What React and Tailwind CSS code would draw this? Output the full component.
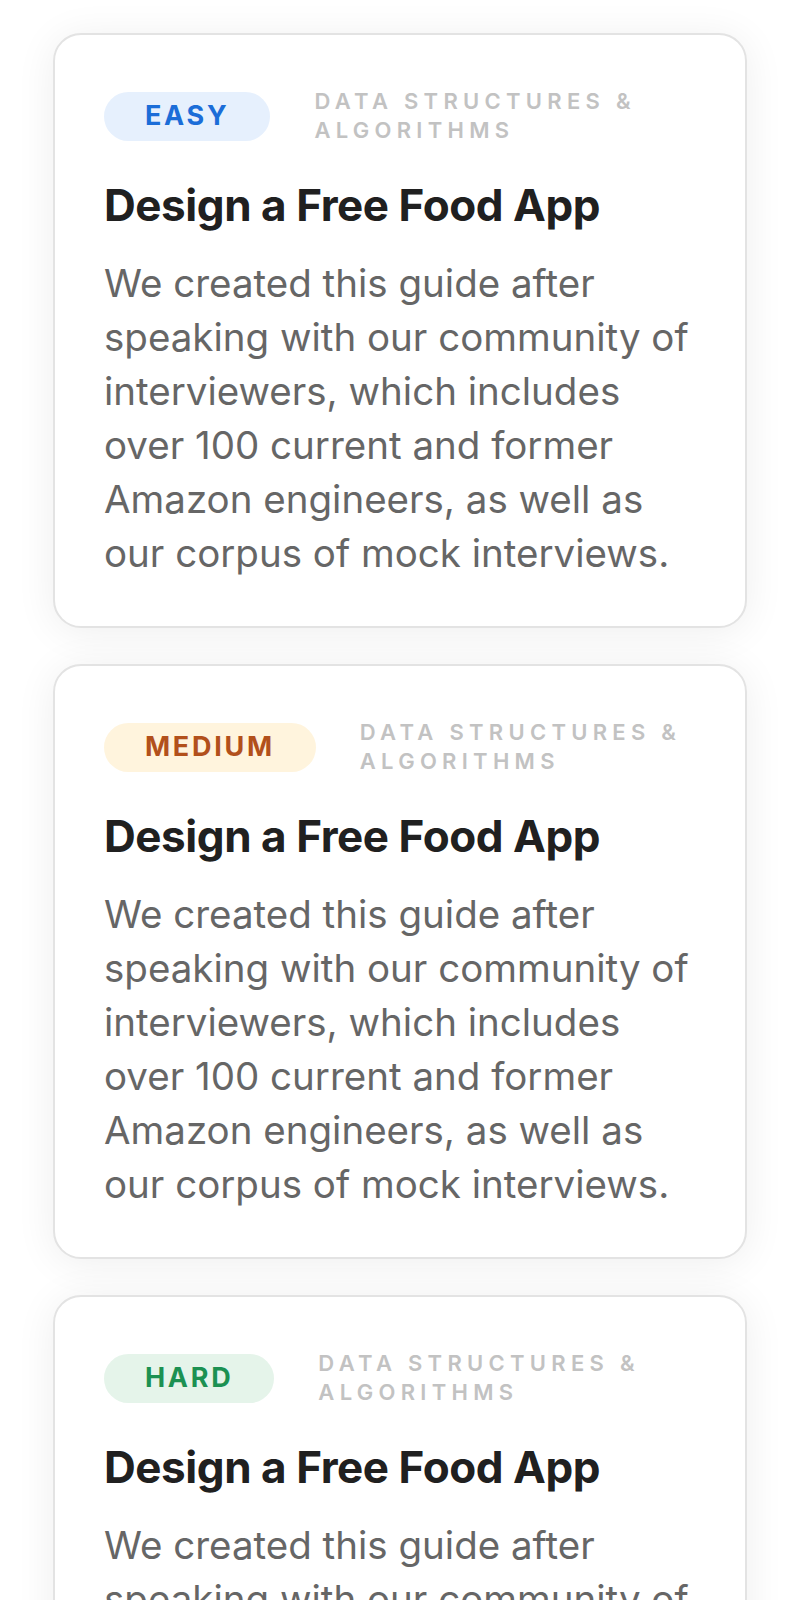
const cards = [
  { level: "EASY", badge: "bg-[#e6f0fd] text-[#1b6dd8]" },
  { level: "MEDIUM", badge: "bg-[#fff4dd] text-[#b2501b]" },
  { level: "HARD", badge: "bg-[#e5f4ea] text-[#1c9152]" },
];

export default function App() {
  return (
    <div className="min-h-[1600px] bg-white font-['Inter',sans-serif]">
      <div className="flex flex-col gap-[36px] pl-[53px] pt-[33px] pb-10">
        {cards.map((c) => (
          <ProblemCard key={c.level} {...c} />
        ))}
      </div>
    </div>
  );
}

/* Card */
function ProblemCard({ level, badge }) {
  return (
    <div className="w-[694px] rounded-[28px] border-2 border-[#e3e3e3] bg-white px-[49px] pt-[52px] pb-[46px] shadow-[0_4px_40px_rgba(0,0,0,0.07)]">
      {/* Tag row */}
      <div className="flex items-center gap-[44px]">
        <span
          className={`flex h-[49px] shrink-0 items-center rounded-full px-[41px] text-[27px] font-bold tracking-[0.1em] ${badge}`}
        >
          {level}
        </span>
        <p className="text-[22px] font-semibold uppercase leading-[29px] tracking-[0.24em] text-[#c2c2c2]">
          Data Structures &amp; Algorithms
        </p>
      </div>

      {/* Title */}
      <h2 className="mt-[33px] text-[44px] font-bold leading-[54px] tracking-[-0.01em] text-[#202020]">
        Design a Free Food App
      </h2>

      {/* Body */}
      <p className="mt-[24px] text-[38.5px] leading-[54px] text-[#666666]">
        We created this guide after speaking with our community of
        interviewers, which includes over 100 current and former Amazon
        engineers, as well as our corpus of mock interviews.
      </p>
    </div>
  );
}
